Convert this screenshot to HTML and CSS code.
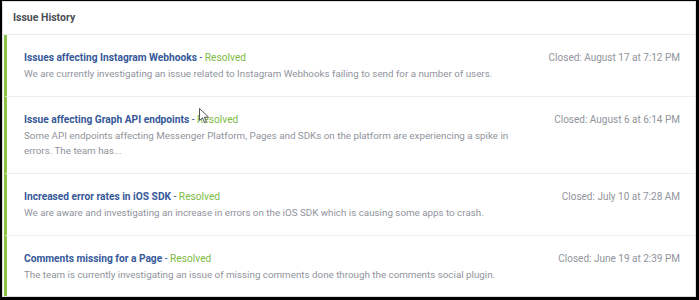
FILE: index.html
```html
<!DOCTYPE html>
<html lang="en">

<head>
    <meta charset="UTF-8" />
    <meta name="viewport" content="width=device-width, initial-scale=1.0" />
    <title>Issue History</title>
    <link rel="stylesheet" href="styles.css">
</head>

<body id="html-body">

    <section id="history-panel">
        <header id="panel-header">Issue History</header>

        <ul id="issue-list">
            <li class="issueItem">
                <div class="issueText">
                    <p class="issueTitle">Issues affecting Instagram Webhooks <span class="issueState">- <span class="stateOk">Resolved</span></span></p>
                    <p class="issueDesc">We are currently investigating an issue related to Instagram Webhooks failing to send for a number of users.</p>
                </div>
                <p class="issueClosed">Closed: August 17 at 7:12 PM</p>
            </li>
            <li class="issueItem">
                <div class="issueText">
                    <p class="issueTitle">Issue affecting Graph API endpoints <span class="issueState">- <span class="stateOk">Resolved</span></span></p>
                    <p class="issueDesc">Some API endpoints affecting Messenger Platform, Pages and SDKs on the platform are experiencing a spike in errors. The team has...</p>
                </div>
                <p class="issueClosed">Closed: August 6 at 6:14 PM</p>
            </li>
            <li class="issueItem">
                <div class="issueText">
                    <p class="issueTitle">Increased error rates in iOS SDK <span class="issueState">- <span class="stateOk">Resolved</span></span></p>
                    <p class="issueDesc">We are aware and investigating an increase in errors on the iOS SDK which is causing some apps to crash.</p>
                </div>
                <p class="issueClosed">Closed: July 10 at 7:28 AM</p>
            </li>
            <li class="issueItem">
                <div class="issueText">
                    <p class="issueTitle">Comments missing for a Page <span class="issueState">- <span class="stateOk">Resolved</span></span></p>
                    <p class="issueDesc">The team is currently investigating an issue of missing comments done through the comments social plugin.</p>
                </div>
                <p class="issueClosed">Closed: June 19 at 2:39 PM</p>
            </li>
        </ul>

        <svg id="mouse-cursor" width="11" height="16" viewBox="0 0 11 16">
            <path d="M0.5 0.5 L0.5 12.5 L3.5 9.8 L5.6 14.6 L7.4 13.8 L5.4 9.2 L9.6 9.2 Z" fill="#ffffff" stroke="#555" stroke-width="1" />
        </svg>
    </section>

</body>

</html>
```

FILE: styles.css
```css
#html-body {
    margin: 0;
    background-color: rgb(0, 0, 0);
    font-family: Roboto, "Liberation Sans", sans-serif;
}

#history-panel {
    position: relative;
    height: 294px;
    margin: 1px 3px 0 2px;
    border: 1px solid rgb(221, 223, 226);
    background-color: rgb(255, 255, 255);
    overflow: hidden;
}

#panel-header {
    height: 32px;
    padding-left: 10px;
    line-height: 31px;
    font-size: 10.5px;
    font-weight: 700;
    color: rgb(75, 79, 86);
    border-bottom: 1px solid rgb(233, 235, 238);
}

#issue-list {
    list-style: none;
    margin: 0;
    padding: 0 0 0 1px;
}

.issueItem {
    display: grid;
    grid-template-columns: 495px 1fr;
    column-gap: 10px;
    padding: 15px 15px 15px 17px;
    border-left: 3px solid rgb(139, 195, 74);
    border-bottom: 1px solid rgb(236, 237, 240);
}

.issueItem p {
    margin: 0;
    line-height: 15px;
    font-size: 9.8px;
}

.issueItem .issueTitle {
    line-height: 16px;
    font-size: 10.2px;
    font-weight: 700;
    color: rgb(54, 88, 153);
}

.issueState {
    font-weight: 400;
}

.stateOk {
    color: rgb(126, 186, 70);
}

.issueDesc {
    color: rgb(144, 148, 156);
}

.issueItem .issueClosed {
    line-height: 16px;
    text-align: right;
    white-space: nowrap;
    font-size: 10px;
    color: rgb(144, 148, 156);
}

#mouse-cursor {
    position: absolute;
    left: 196px;
    top: 106px;
}
```
